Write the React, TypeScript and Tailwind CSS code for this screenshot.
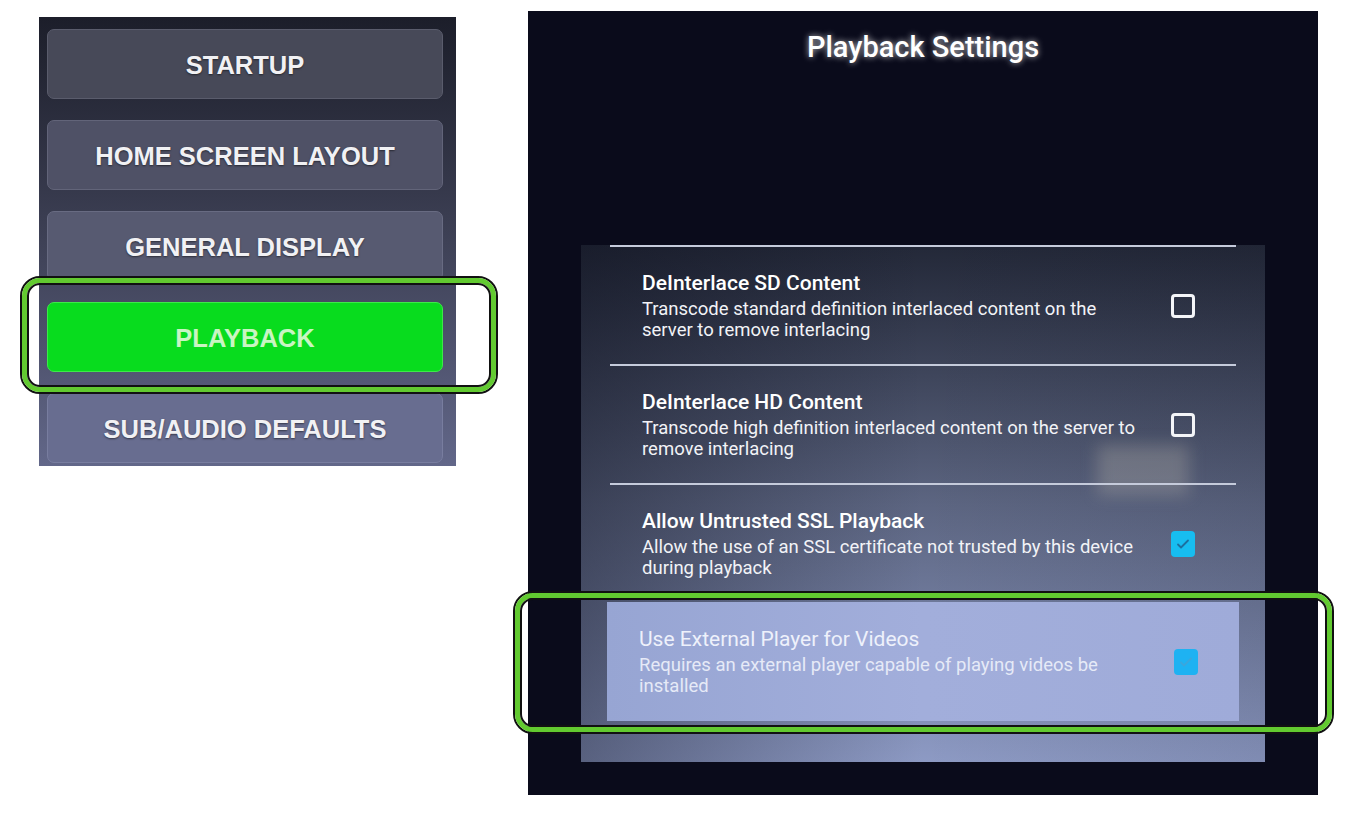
import React from "react";

type Setting = {
  title: string;
  lines: string[];
  checked: boolean;
  focused?: boolean;
};

const menu = [
  { label: "STARTUP", bg: "bg-[#474958]", border: "border-[#5a5c6c]" },
  { label: "HOME SCREEN LAYOUT", bg: "bg-[#4f5166]", border: "border-[#626479]" },
  { label: "GENERAL DISPLAY", bg: "bg-[#575a71]", border: "border-[#686b82]" },
  { label: "PLAYBACK", bg: "bg-[#08dc1e]", border: "border-[#3ee94a]", active: true },
  { label: "SUB/AUDIO DEFAULTS", bg: "bg-[#686d90]", border: "border-[#787d9f]" },
];

const settings: Setting[] = [
  {
    title: "DeInterlace SD Content",
    lines: ["Transcode standard definition interlaced content on the", "server to remove interlacing"],
    checked: false,
  },
  {
    title: "DeInterlace HD Content",
    lines: ["Transcode high definition interlaced content on the server to", "remove interlacing"],
    checked: false,
  },
  {
    title: "Allow Untrusted SSL Playback",
    lines: ["Allow the use of an SSL certificate not trusted by this device", "during playback"],
    checked: true,
  },
  {
    title: "Use External Player for Videos",
    lines: ["Requires an external player capable of playing videos be", "installed"],
    checked: true,
    focused: true,
  },
];

const CheckBox = ({ checked, focused }: { checked: boolean; focused?: boolean }) => {
  if (!checked) {
    return <div className="w-[24px] h-[24px] rounded-[4px] border-[3px] border-[#f4f5f8] shrink-0" />;
  }
  return (
    <div
      className={`w-[24px] h-[26px] rounded-[4px] flex items-center justify-center shrink-0 ${
        focused ? "bg-[#1eb2f2]" : "bg-[#17bdf0]"
      }`}
    >
      <svg width="16" height="16" viewBox="0 0 16 16" fill="none">
        <path
          d="M3 8.5l3 3 7-7"
          stroke={focused ? "#3ba6dc" : "#1c6f9e"}
          strokeWidth="1.8"
          strokeLinecap="round"
          strokeLinejoin="round"
        />
      </svg>
    </div>
  );
};

const SettingRow = ({ item }: { item: Setting }) => (
  <div
    className={`flex items-center h-[119px] pl-[32px] pr-[41px] ${
      item.focused
        ? "mx-[26px] bg-gradient-to-r from-[#97a5d3] via-[#a2aedb] to-[#9fabd9]"
        : "mx-[29px] border-t-2 border-[#c5cbdb]"
    }`}
  >
    <div className="flex-1">
      <div
        className={`text-[21px] leading-[25px] ${
          item.focused ? "text-[#eef1fb] font-normal" : "text-white font-medium"
        }`}
      >
        {item.title}
      </div>
      <div
        className={`mt-[3px] text-[18.5px] leading-[21px] whitespace-nowrap ${
          item.focused ? "text-[#e6eaf7]" : "text-[#f2f3f7]"
        }`}
      >
        {item.lines.map((l) => (
          <div key={l}>{l}</div>
        ))}
      </div>
    </div>
    <CheckBox checked={item.checked} focused={item.focused} />
  </div>
);

// green annotation frame: black / green / black rings
const Frame = ({ className }: { className: string }) => (
  <div className={`absolute pointer-events-none rounded-[20px] border-[2px] border-[#111] ${className}`}>
    <div className="w-full h-full rounded-[18px] border-[5px] border-[#62ca30]">
      <div className="w-full h-full rounded-[13px] border-[2px] border-[#111]" />
    </div>
  </div>
);

export default function App() {
  return (
    <div className="relative w-[1355px] h-[831px] bg-white overflow-hidden font-['Roboto',sans-serif]">
      <div className="flex items-start pl-[39px]">
        {/* settings menu */}
        <div className="mt-[17px] w-[417px] h-[449px] pl-[8px] pr-[13px] pt-[12px] flex flex-col gap-[21px] bg-gradient-to-b from-[#1c1e2a] via-[#3e4156] to-[#626789]">
          {menu.map((m) => (
            <div
              key={m.label}
              className={`h-[70px] shrink-0 rounded-[7px] border ${m.bg} ${m.border} flex items-center justify-center`}
            >
              <span
                className={`mt-[3px] font-['Liberation_Sans',sans-serif] font-bold text-[25.5px] ${
                  m.active ? "text-[#c9f5c3]" : "text-[#f1f1f4] [text-shadow:0_1px_2px_rgba(0,0,0,0.5)]"
                }`}
              >
                {m.label}
              </span>
            </div>
          ))}
        </div>

        {/* playback settings screen */}
        <div className="ml-[72px] mt-[11px] w-[790px] h-[784px] bg-[#0a0b1b] flex flex-col items-center">
          <h1 className="mt-[18px] text-[29px] leading-[36px] font-medium text-white [text-shadow:0_0_6px_rgba(255,255,255,0.75)]">
            Playback Settings
          </h1>
          <div className="relative mt-[180px] w-[684px] h-[517px] bg-gradient-to-b from-[#232838] via-[#5c6581] to-[#8d9ac4]">
            <div className="absolute inset-0 bg-gradient-to-r from-[rgba(10,12,25,0.4)] via-transparent to-[rgba(10,12,25,0.1)]" />
            <div className="absolute left-[516px] top-[200px] w-[92px] h-[50px] bg-[rgba(226,218,196,0.22)] blur-[8px]" />
            <div className="relative">
              {settings.map((s) => (
                <SettingRow key={s.title} item={s} />
              ))}
            </div>
          </div>
        </div>
      </div>

      <Frame className="left-[20px] top-[276px] w-[478px] h-[118px]" />
      <Frame className="left-[513px] top-[591px] w-[821px] h-[143px]" />
    </div>
  );
}
